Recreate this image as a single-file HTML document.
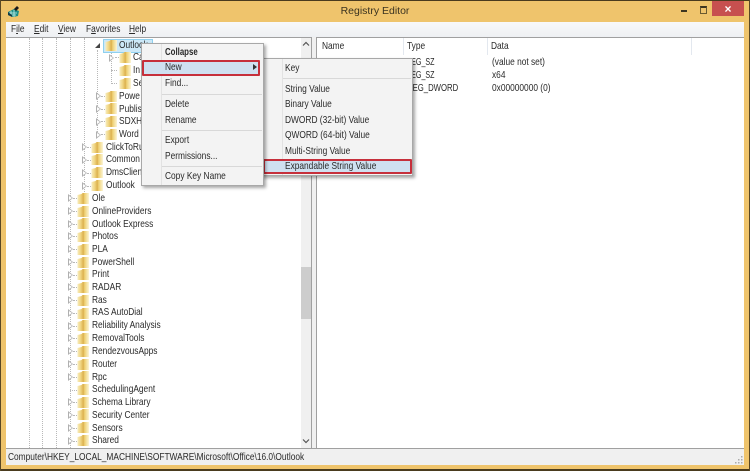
<!DOCTYPE html>
<html><head><meta charset="utf-8"><style>
html,body{margin:0;padding:0;width:750px;height:471px;overflow:hidden;background:#efc46c}
body{position:relative;font-family:"Liberation Sans",sans-serif;font-size:10px;color:#222;filter:blur(.3px)}
.a{position:absolute}
.t{position:absolute;white-space:nowrap;line-height:13px;font-size:10.2px;color:#2a2a2a;transform:scaleX(.82);transform-origin:0 0}
.dot{position:absolute;width:0;border-left:1px dotted #b8b8b8}
.h{position:absolute;height:0;width:6px;border-top:1px dotted #b8b8b8}
.tri{position:absolute;width:0;height:0;border-left:5px solid #b0b0b0;border-top:4px solid transparent;border-bottom:4px solid transparent}
.tri:after{content:"";position:absolute;left:-4.4px;top:-2.5px;width:0;height:0;border-left:3px solid #fff;border-top:2.5px solid transparent;border-bottom:2.5px solid transparent}
.f{position:absolute;width:13px;height:13px}
.menu{position:absolute;background:#f3f3f3;border:1px solid #a8a8a8;box-shadow:2px 2px 3px rgba(0,0,0,.35)}
.sep{position:absolute;height:1px;background:#d8d8d8}
u{text-decoration:underline}
</style></head><body>
<svg width="0" height="0" style="position:absolute"><defs>
<linearGradient id="g" x1="0" x2="1" y1="0" y2="0"><stop offset="0" stop-color="#f8edbe"/><stop offset=".3" stop-color="#efd27c"/><stop offset=".5" stop-color="#dcb150"/><stop offset=".62" stop-color="#eed073"/><stop offset="1" stop-color="#fcf5d6"/></linearGradient>
<symbol id="fo" viewBox="0 0 13 13"><path d="M.5 3L4.5 2 5.5 1H12V12H.5z" fill="url(#g)"/></symbol>
</defs></svg>

<!-- window frame -->
<div class="a" style="left:0;top:0;width:748px;height:469px;border:1px solid #6b5730"></div>
<div class="a" style="left:0;top:0;width:750px;height:1px;background:#4a3b1e"></div>
<div class="a" style="left:0;top:469px;width:750px;height:2px;background:#4a3b1e"></div>
<div class="a" style="left:0;top:0;width:1px;height:471px;background:#5a4824"></div>
<div class="a" style="left:749px;top:0;width:1px;height:471px;background:#5a4824"></div>

<!-- title bar -->
<svg class="a" style="left:7px;top:5px" width="13" height="13" viewBox="0 0 13 13"><path d="M1 7l6-3 5 2-1 5-5 1-5-2z" fill="#1d8f88"/><path d="M2 8h8M3 10h6M4 6v6M7 5v7" stroke="#c5efe9" stroke-width=".8"/><path d="M7 4l3-3 2 2-3 3z" fill="#1a1a1a"/><path d="M1 7l4 3v2L1 10z" fill="#123a44"/></svg>
<div class="a" style="left:0;top:4px;width:750px;text-align:center;font-size:10.5px;line-height:15px;color:#3a3320">Registry Editor</div>
<div class="a" style="left:681px;top:10px;width:6px;height:2px;background:#3d3520"></div>
<div class="a" style="left:700px;top:6px;width:5px;height:5px;border:1px solid #6a5a30;border-top:2px solid #3d3520"></div>
<div class="a" style="left:712px;top:1px;width:32px;height:15px;background:#c7504f"></div>
<div class="a" style="left:712px;top:1px;width:32px;height:16px;text-align:center;font-size:12px;line-height:16px;color:#fff;font-weight:bold">×</div>

<!-- menu bar -->
<div class="a" style="left:6px;top:22px;width:738px;height:15px;background:linear-gradient(#f8f8f9,#eef0f3)"></div>
<div class="t" style="left:11px;top:23px">F<u>i</u>le</div>
<div class="t" style="left:34px;top:23px"><u>E</u>dit</div>
<div class="t" style="left:58px;top:23px"><u>V</u>iew</div>
<div class="t" style="left:86px;top:23px">F<u>a</u>vorites</div>
<div class="t" style="left:129px;top:23px"><u>H</u>elp</div>

<!-- client -->
<div class="a" style="left:6px;top:37px;width:738px;height:412px;background:#f0f0f0"></div>
<div class="a" style="left:6px;top:37px;width:306px;height:411px;background:#fff;border-top:1px solid #a0a0a0;border-right:1px solid #a0a0a0;box-sizing:border-box"></div>
<div class="a" style="left:316px;top:37px;width:428px;height:411px;background:#fff;border-top:1px solid #a0a0a0;border-left:1px solid #a0a0a0;box-sizing:border-box"></div>

<!-- scrollbar -->
<div class="a" style="left:301px;top:38px;width:10px;height:410px;background:#f0f0f0"></div>
<div class="a" style="left:301px;top:267px;width:10px;height:52px;background:#cdcdcd"></div>
<svg class="a" style="left:301px;top:41px" width="10" height="6"><path d="M2 4.5l3-3 3 3" fill="none" stroke="#555" stroke-width="1.2"/></svg>
<svg class="a" style="left:301px;top:438px" width="10" height="6"><path d="M2 1.5l3 3 3-3" fill="none" stroke="#555" stroke-width="1.2"/></svg>

<!-- tree lines -->
<div class="dot" style="left:29px;top:38px;height:410px"></div>
<div class="dot" style="left:42px;top:38px;height:410px"></div>
<div class="dot" style="left:56px;top:38px;height:410px"></div>
<div class="dot" style="left:70px;top:38px;height:410px"></div>
<div class="dot" style="left:84px;top:38px;height:154px"></div>
<div class="dot" style="left:97px;top:50px;height:84px"></div>
<div class="dot" style="left:111px;top:52px;height:32px"></div>

<!-- Outlook selection -->
<div class="a" style="left:103px;top:39px;width:48px;height:12px;background:#cde8f7;border:1px solid #8fd0ee"></div>
<div class="a" style="left:95px;top:43px;width:0;height:0;border-bottom:5px solid #444;border-left:5px solid transparent"></div>
<svg class="f" style="left:105px;top:39px"><use href="#fo"/></svg>
<div class="t" style="left:119px;top:39px">Outlook</div>

<!-- sub-level 3 -->
<div class="tri" style="left:109px;top:54px"></div><div class="h" style="left:115px;top:57px"></div><svg class="f" style="left:119px;top:51px"><use href="#fo"/></svg><div class="t" style="left:133px;top:51px">Ca</div>
<div class="h" style="left:111px;top:70px"></div><svg class="f" style="left:119px;top:64px"><use href="#fo"/></svg><div class="t" style="left:133px;top:64px">In</div>
<div class="h" style="left:111px;top:83px"></div><svg class="f" style="left:119px;top:77px"><use href="#fo"/></svg><div class="t" style="left:133px;top:77px">Se</div>

<!-- level 2 -->
<div class="tri" style="left:96px;top:92px"></div><div class="h" style="left:101px;top:96px;width:4px"></div><svg class="f" style="left:105px;top:90px"><use href="#fo"/></svg><div class="t" style="left:119px;top:90px">Powe</div>
<div class="tri" style="left:96px;top:105px"></div><div class="h" style="left:101px;top:109px;width:4px"></div><svg class="f" style="left:105px;top:102px"><use href="#fo"/></svg><div class="t" style="left:119px;top:103px">Publis</div>
<div class="tri" style="left:96px;top:118px"></div><div class="h" style="left:101px;top:121px;width:4px"></div><svg class="f" style="left:105px;top:115px"><use href="#fo"/></svg><div class="t" style="left:119px;top:115px">SDXH</div>
<div class="tri" style="left:96px;top:131px"></div><div class="h" style="left:101px;top:134px;width:4px"></div><svg class="f" style="left:105px;top:128px"><use href="#fo"/></svg><div class="t" style="left:119px;top:128px">Word</div>

<div class="tri" style="left:82px;top:143px"></div><div class="h" style="left:87px;top:147px;width:4px"></div><svg class="f" style="left:91px;top:141px"><use href="#fo"/></svg><div class="t" style="left:106px;top:141px">ClickToRun</div>
<div class="tri" style="left:82px;top:156px"></div><div class="h" style="left:87px;top:160px;width:4px"></div><svg class="f" style="left:91px;top:153px"><use href="#fo"/></svg><div class="t" style="left:106px;top:153px">Common</div>
<div class="tri" style="left:82px;top:169px"></div><div class="h" style="left:87px;top:173px;width:4px"></div><svg class="f" style="left:91px;top:166px"><use href="#fo"/></svg><div class="t" style="left:106px;top:166px">DmsClient</div>
<div class="tri" style="left:82px;top:182px"></div><div class="h" style="left:87px;top:186px;width:4px"></div><svg class="f" style="left:91px;top:179px"><use href="#fo"/></svg><div class="t" style="left:106px;top:179px">Outlook</div>

<!-- level 1 -->
<div class="tri" style="left:68px;top:194px"></div><div class="h" style="left:73px;top:198px;width:4px"></div><svg class="f" style="left:77px;top:192px"><use href="#fo"/></svg><div class="t" style="left:92px;top:192px">Ole</div>
<div class="tri" style="left:68px;top:207px"></div><div class="h" style="left:73px;top:211px;width:4px"></div><svg class="f" style="left:77px;top:205px"><use href="#fo"/></svg><div class="t" style="left:92px;top:205px">OnlineProviders</div>
<div class="tri" style="left:68px;top:220px"></div><div class="h" style="left:73px;top:224px;width:4px"></div><svg class="f" style="left:77px;top:217px"><use href="#fo"/></svg><div class="t" style="left:92px;top:218px">Outlook Express</div>
<div class="tri" style="left:68px;top:232px"></div><div class="h" style="left:73px;top:236px;width:4px"></div><svg class="f" style="left:77px;top:230px"><use href="#fo"/></svg><div class="t" style="left:92px;top:230px">Photos</div>
<div class="tri" style="left:68px;top:245px"></div><div class="h" style="left:73px;top:249px;width:4px"></div><svg class="f" style="left:77px;top:243px"><use href="#fo"/></svg><div class="t" style="left:92px;top:243px">PLA</div>
<div class="tri" style="left:68px;top:258px"></div><div class="h" style="left:73px;top:262px;width:4px"></div><svg class="f" style="left:77px;top:256px"><use href="#fo"/></svg><div class="t" style="left:92px;top:256px">PowerShell</div>
<div class="tri" style="left:68px;top:271px"></div><div class="h" style="left:73px;top:275px;width:4px"></div><svg class="f" style="left:77px;top:268px"><use href="#fo"/></svg><div class="t" style="left:92px;top:268px">Print</div>
<div class="tri" style="left:68px;top:283px"></div><div class="h" style="left:73px;top:287px;width:4px"></div><svg class="f" style="left:77px;top:281px"><use href="#fo"/></svg><div class="t" style="left:92px;top:281px">RADAR</div>
<div class="tri" style="left:68px;top:296px"></div><div class="h" style="left:73px;top:300px;width:4px"></div><svg class="f" style="left:77px;top:294px"><use href="#fo"/></svg><div class="t" style="left:92px;top:294px">Ras</div>
<div class="tri" style="left:68px;top:309px"></div><div class="h" style="left:73px;top:313px;width:4px"></div><svg class="f" style="left:77px;top:307px"><use href="#fo"/></svg><div class="t" style="left:92px;top:306px">RAS AutoDial</div>
<div class="tri" style="left:68px;top:322px"></div><div class="h" style="left:73px;top:326px;width:4px"></div><svg class="f" style="left:77px;top:319px"><use href="#fo"/></svg><div class="t" style="left:92px;top:319px">Reliability Analysis</div>
<div class="tri" style="left:68px;top:334px"></div><div class="h" style="left:73px;top:338px;width:4px"></div><svg class="f" style="left:77px;top:332px"><use href="#fo"/></svg><div class="t" style="left:92px;top:332px">RemovalTools</div>
<div class="tri" style="left:68px;top:347px"></div><div class="h" style="left:73px;top:351px;width:4px"></div><svg class="f" style="left:77px;top:345px"><use href="#fo"/></svg><div class="t" style="left:92px;top:345px">RendezvousApps</div>
<div class="tri" style="left:68px;top:360px"></div><div class="h" style="left:73px;top:364px;width:4px"></div><svg class="f" style="left:77px;top:358px"><use href="#fo"/></svg><div class="t" style="left:92px;top:358px">Router</div>
<div class="tri" style="left:68px;top:373px"></div><div class="h" style="left:73px;top:377px;width:4px"></div><svg class="f" style="left:77px;top:370px"><use href="#fo"/></svg><div class="t" style="left:92px;top:371px">Rpc</div>
<div class="h" style="left:70px;top:390px;width:7px"></div><svg class="f" style="left:77px;top:383px"><use href="#fo"/></svg><div class="t" style="left:92px;top:383px">SchedulingAgent</div>
<div class="tri" style="left:68px;top:398px"></div><div class="h" style="left:73px;top:402px;width:4px"></div><svg class="f" style="left:77px;top:396px"><use href="#fo"/></svg><div class="t" style="left:92px;top:396px">Schema Library</div>
<div class="tri" style="left:68px;top:411px"></div><div class="h" style="left:73px;top:415px;width:4px"></div><svg class="f" style="left:77px;top:408px"><use href="#fo"/></svg><div class="t" style="left:92px;top:409px">Security Center</div>
<div class="tri" style="left:68px;top:424px"></div><div class="h" style="left:73px;top:428px;width:4px"></div><svg class="f" style="left:77px;top:421px"><use href="#fo"/></svg><div class="t" style="left:92px;top:422px">Sensors</div>
<div class="tri" style="left:68px;top:437px"></div><div class="h" style="left:73px;top:441px;width:4px"></div><svg class="f" style="left:77px;top:434px"><use href="#fo"/></svg><div class="t" style="left:92px;top:434px">Shared</div>

<!-- list header -->
<div class="a" style="left:403px;top:38px;width:1px;height:17px;background:#e3e8ef"></div>
<div class="a" style="left:487px;top:38px;width:1px;height:17px;background:#e3e8ef"></div>
<div class="a" style="left:691px;top:38px;width:1px;height:17px;background:#e3e8ef"></div>
<div class="t" style="left:322px;top:40px">Name</div>
<div class="t" style="left:407px;top:40px">Type</div>
<div class="t" style="left:491px;top:40px">Data</div>
<div class="t" style="left:406px;top:56px;transform:scaleX(.7)">REG_SZ</div><div class="t" style="left:492px;top:56px">(value not set)</div>
<div class="t" style="left:406px;top:69px;transform:scaleX(.7)">REG_SZ</div><div class="t" style="left:492px;top:69px">x64</div>
<div class="t" style="left:407px;top:82px;transform:scaleX(.76)">REG_DWORD</div><div class="t" style="left:492px;top:82px">0x00000000 (0)</div>

<!-- submenu -->
<div class="menu" style="left:261px;top:58px;width:150px;height:116px"></div>
<div class="a" style="left:282px;top:59px;width:1px;height:116px;background:#e2e2e2"></div>
<div class="sep" style="left:283px;top:78px;width:128px"></div>
<div class="t" style="left:285px;top:62px">Key</div>
<div class="t" style="left:285px;top:83px">String Value</div>
<div class="t" style="left:285px;top:98px">Binary Value</div>
<div class="t" style="left:285px;top:114px">DWORD (32-bit) Value</div>
<div class="t" style="left:285px;top:129px">QWORD (64-bit) Value</div>
<div class="t" style="left:285px;top:145px">Multi-String Value</div>
<div class="a" style="left:263px;top:159px;width:145px;height:11px;background:#cfe0f0;border:2px solid #c62f3b;border-radius:1px"></div>
<div class="t" style="left:285px;top:160px">Expandable String Value</div>

<!-- context menu -->
<div class="menu" style="left:141px;top:43px;width:121px;height:141px"></div>
<div class="a" style="left:161px;top:44px;width:1px;height:141px;background:#e2e2e2"></div>
<div class="t" style="left:165px;top:46px;font-weight:bold;transform:scaleX(.77)">Collapse</div>
<div class="a" style="left:142px;top:60px;width:114px;height:12px;background:#cfe0f0;border:2px solid #c62f3b;border-radius:1px"></div>
<div class="t" style="left:165px;top:61px">New</div>
<div class="a" style="left:253px;top:64px;width:0;height:0;border-left:4px solid #333;border-top:3px solid transparent;border-bottom:3px solid transparent"></div>
<div class="t" style="left:165px;top:77px">Find...</div>
<div class="sep" style="left:162px;top:94px;width:100px"></div>
<div class="t" style="left:165px;top:98px">Delete</div>
<div class="t" style="left:165px;top:114px">Rename</div>
<div class="sep" style="left:162px;top:130px;width:100px"></div>
<div class="t" style="left:165px;top:134px">Export</div>
<div class="t" style="left:165px;top:150px">Permissions...</div>
<div class="sep" style="left:162px;top:166px;width:100px"></div>
<div class="t" style="left:165px;top:170px">Copy Key Name</div>

<!-- status bar -->
<div class="a" style="left:6px;top:448px;width:738px;height:1px;background:#a0a0a0"></div>
<div class="a" style="left:6px;top:449px;width:738px;height:16px;background:#f0f0f0"></div>
<div class="t" style="left:8px;top:451px">Computer\HKEY_LOCAL_MACHINE\SOFTWARE\Microsoft\Office\16.0\Outlook</div>
<svg class="a" style="left:735px;top:456px" width="8" height="8"><g fill="#aaa"><rect x="6" y="0" width="1.5" height="1.5"/><rect x="3" y="3" width="1.5" height="1.5"/><rect x="6" y="3" width="1.5" height="1.5"/><rect x="0" y="6" width="1.5" height="1.5"/><rect x="3" y="6" width="1.5" height="1.5"/><rect x="6" y="6" width="1.5" height="1.5"/></g></svg>
</body></html>
